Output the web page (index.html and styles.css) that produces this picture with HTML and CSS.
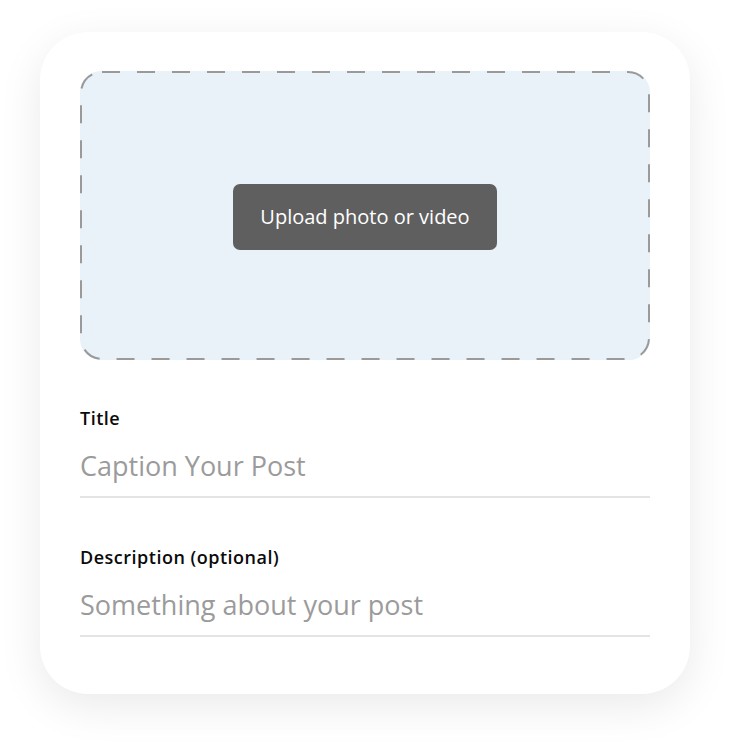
FILE: index.html
```html
<!DOCTYPE html>
<html>
<head>
<meta charset="utf-8">
<link rel="stylesheet" href="styles.css">
</head>
<body>
<div class="card">
  <div class="dropzone">
    <svg class="dash" width="100%" height="100%" preserveAspectRatio="none">
      <rect x="1" y="1" width="568" height="287" rx="21" ry="21" fill="none" stroke="#9a9a9a" stroke-width="2" stroke-dasharray="18 17"/>
    </svg>
    <button class="upload">Upload photo or video</button>
  </div>
  <div class="field">
    <div class="label">Title</div>
    <div class="input">Caption Your Post</div>
  </div>
  <div class="field">
    <div class="label">Description (optional)</div>
    <div class="input">Something about your post</div>
  </div>
</div>
</body>
</html>
```
FILE: styles.css
```css
html, body {
  margin: 0;
  padding: 0;
  background: #ffffff;
  font-family: "Open Sans", "Noto Sans", sans-serif;
}
body {
  padding-bottom: 48px;
}
.card {
  margin: 32px 40px 0 40px;
  width: 650px;
  height: 662px;
  box-sizing: border-box;
  padding: 39px 40px 0 40px;
  background: #fff;
  border-radius: 48px;
  box-shadow: 0 12px 44px rgba(0, 0, 0, 0.085);
}
.dropzone {
  position: relative;
  height: 289px;
  background: #e9f1f9;
  border-radius: 21px;
  display: flex;
  align-items: center;
  justify-content: center;
}
.dash {
  position: absolute;
  left: 0;
  top: 0;
}
.upload {
  position: relative;
  width: 264px;
  height: 66px;
  margin-top: 2px;
  border: none;
  border-radius: 7px;
  background: #5f5f5f;
  color: #fff;
  font-family: "Open Sans", "Noto Sans", sans-serif;
  font-size: 20px;
  font-weight: 400;
  padding: 0;
}
.field {
  margin-top: 46px;
  border-bottom: 2px solid #e4e4e4;
}
.field + .field {
  margin-top: 47px;
}
.label {
  font-size: 18px;
  line-height: 24px;
  font-weight: 600;
  letter-spacing: 0.5px;
  color: #0a0a0a;
}
.input {
  margin-top: 18px;
  font-size: 27px;
  line-height: 36px;
  color: #9b9b9b;
  padding-bottom: 12px;
}
```
